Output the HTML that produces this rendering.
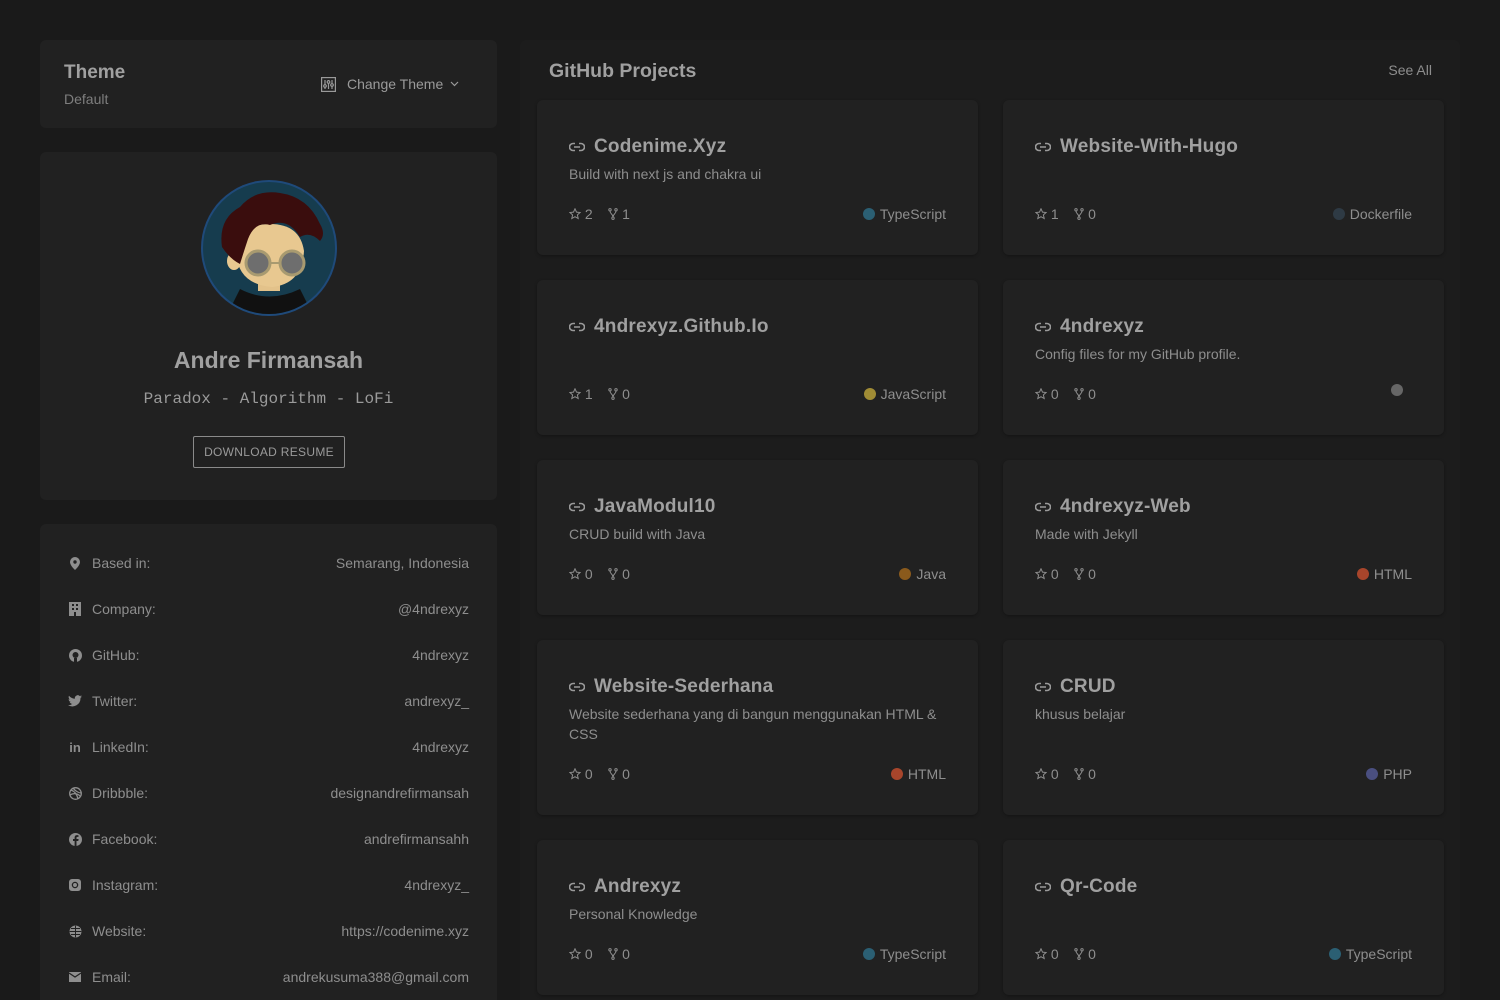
<!DOCTYPE html>
<html><head><meta charset="utf-8"><style>
*{box-sizing:border-box;margin:0;padding:0}
html{width:1500px;height:1000px;overflow:hidden}
body{width:1500px;height:1000px;overflow:hidden;background:#1a1a1a;font-family:"Liberation Sans",sans-serif;color:#9a9a9a;position:relative}
.card{position:absolute;background:#212121;border-radius:6px}
.panel{position:absolute;left:520px;top:40px;width:940px;height:980px;background:#1c1c1c;border-radius:6px}
.pc{position:absolute;width:441px;background:#212121;border-radius:6px;box-shadow:0 1px 3px rgba(0,0,0,.3)}
.pt{position:absolute;left:32px;top:36px;font-size:19px;font-weight:bold;color:#a0a0a0;letter-spacing:.2px;display:flex;align-items:center}
.pt svg{margin-right:9px}
.pd{position:absolute;left:32px;top:64px;width:380px;font-size:14px;line-height:20px;color:#8e8e8e}
.ps{position:absolute;left:32px;bottom:33px;font-size:14px;color:#8e8e8e;display:flex;align-items:center}
.pl{position:absolute;right:32px;bottom:33px;font-size:14px;color:#8e8e8e;display:flex;align-items:center}
.dot{width:12px;height:12px;border-radius:50%;margin-right:5px;display:inline-block}
.row{position:absolute;left:28px;right:28px;display:flex;align-items:center;font-size:14px;color:#8e8e8e}
.row .ic{width:14px;height:14px;margin-right:10px;display:flex;align-items:center;justify-content:center}
.row .v{margin-left:auto}
</style></head><body>
<div class="card" style="left:40px;top:40px;width:457px;height:88px">
<div style="position:absolute;left:24px;top:22px;font-size:19px;font-weight:bold;color:#a0a0a0">Theme</div>
<div style="position:absolute;left:24px;top:51px;font-size:14px;color:#7e7e7e">Default</div>
<div style="position:absolute;left:281px;top:36px;font-size:14px;color:#9a9a9a;display:flex;align-items:center">
<svg width="15" height="15" viewBox="0 0 15 15" fill="none" stroke="#9a9a9a" stroke-width="1.2"><rect x="0.6" y="0.6" width="13.8" height="13.8"/><path d="M4 3v9M7.5 3v9M11 3v9"/><circle cx="4" cy="9" r="1.3" fill="#212121"/><circle cx="7.5" cy="5" r="1.3" fill="#212121"/><circle cx="11" cy="8" r="1.3" fill="#212121"/></svg>
<span style="margin-left:11px">Change Theme</span>
<svg style="margin-left:7px" width="9" height="6" viewBox="0 0 9 6" fill="none" stroke="#9a9a9a" stroke-width="1.2"><path d="M1 1l3.5 3.5L8 1"/></svg></div>
</div>
<div class="card" style="left:40px;top:152px;width:457px;height:348px">
<svg style="position:absolute;left:160px;top:27px" width="138" height="138" viewBox="0 0 138 138">
<defs><clipPath id="cc"><circle cx="69" cy="69" r="66"/></clipPath></defs>
<circle cx="69" cy="69" r="68" fill="#1f4a7a"/><circle cx="69" cy="69" r="66" fill="#163c4e"/>
<g clip-path="url(#cc)">
<path d="M40 110 Q69 125 100 110 L115 140 L25 140Z" fill="#111"/>
<rect x="58" y="92" width="22" height="20" fill="#e3c28a"/>
<path d="M36 70 Q36 105 72 108 Q102 105 104 72 Q100 45 70 45 Q40 45 36 70Z" fill="#e8c890"/>
<ellipse cx="34" cy="82" rx="7" ry="9" fill="#e8c890"/>
<path d="M22 68 Q18 40 40 28 Q55 10 80 14 Q108 18 120 45 Q126 55 120 62 Q110 52 100 58 Q88 38 70 46 Q55 42 48 60 Q44 72 40 85 Q30 80 22 68Z" fill="#3a0d0d"/>
<circle cx="58" cy="84" r="12" fill="#6e6e6e" stroke="#a89a70" stroke-width="3"/><circle cx="92" cy="84" r="12" fill="#6e6e6e" stroke="#a89a70" stroke-width="3"/>
<path d="M70 84h10" stroke="#a89a70" stroke-width="2"/>
</g>
</svg>
<div style="position:absolute;left:0;right:0;top:195px;text-align:center;font-size:23px;font-weight:bold;color:#a0a0a0">Andre Firmansah</div>
<div style="position:absolute;left:0;right:0;top:238px;text-align:center;font-family:'Liberation Mono',monospace;font-size:16px;color:#9a9a9a">Paradox - Algorithm - LoFi</div>
<div style="position:absolute;left:153px;top:284px;width:152px;height:32px;border:1px solid #8a8a8a;border-radius:2px;font-size:12px;color:#9a9a9a;text-align:center;line-height:30px;letter-spacing:.3px">DOWNLOAD RESUME</div>
</div>
<div class="card" style="left:40px;top:524px;width:457px;height:476px;border-radius:6px 6px 0 0">
<div class="row" style="top:31px"><span class="ic"><svg width="10" height="13" viewBox="0 0 10 13"><path d="M5 0a5 5 0 0 0-5 5c0 3.5 5 8 5 8s5-4.5 5-8a5 5 0 0 0-5-5z" fill="#8e8e8e"/><circle cx="5" cy="5" r="1.7" fill="#212121"/></svg></span>Based in:<span class="v">Semarang, Indonesia</span></div>
<div class="row" style="top:77px"><span class="ic"><svg width="12" height="14" viewBox="0 0 12 14"><rect x="0" y="0" width="12" height="14" fill="#8e8e8e"/><g fill="#212121"><rect x="3" y="2" width="2" height="2"/><rect x="7" y="2" width="2" height="2"/><rect x="3" y="6" width="2" height="2"/><rect x="7" y="6" width="2" height="2"/><rect x="5" y="10" width="2" height="4"/></g></svg></span>Company:<span class="v">@4ndrexyz</span></div>
<div class="row" style="top:123px"><span class="ic"><svg width="13" height="13" viewBox="0 0 13 13"><circle cx="6.5" cy="6.5" r="6.5" fill="#8e8e8e"/><circle cx="6.5" cy="6" r="3" fill="#212121"/><rect x="5" y="9" width="3" height="4" fill="#212121"/></svg></span>GitHub:<span class="v">4ndrexyz</span></div>
<div class="row" style="top:169px"><span class="ic"><svg width="14" height="12" viewBox="0 0 14 12"><path d="M14 1.5c-.5.2-1 .4-1.6.4.6-.4 1-.9 1.2-1.5-.6.3-1.2.6-1.8.7A2.9 2.9 0 0 0 6.9 3.7 8 8 0 0 1 1 .7a2.9 2.9 0 0 0 .9 3.8c-.5 0-.9-.2-1.3-.4 0 1.4 1 2.6 2.3 2.8-.4.1-.9.1-1.3 0 .4 1.1 1.4 2 2.700 2A5.8 5.8 0 0 1 0 10.1 8.1 8.1 0 0 0 12.5 3.3v-.4c.6-.4 1.1-.9 1.5-1.4z" fill="#8e8e8e"/></svg></span>Twitter:<span class="v">andrexyz_</span></div>
<div class="row" style="top:215px"><span class="ic" style="font-weight:bold;font-size:13px">in</span>LinkedIn:<span class="v">4ndrexyz</span></div>
<div class="row" style="top:261px"><span class="ic"><svg width="13" height="13" viewBox="0 0 13 13" fill="none" stroke="#8e8e8e" stroke-width="1.3"><circle cx="6.5" cy="6.5" r="5.8"/><path d="M2 3c3 1 6 4 7 9M4 1c2 3 6 5 8 5M1 8c3-2 7-2 10 1"/></svg></span>Dribbble:<span class="v">designandrefirmansah</span></div>
<div class="row" style="top:307px"><span class="ic"><svg width="13" height="13" viewBox="0 0 13 13"><circle cx="6.5" cy="6.5" r="6.5" fill="#8e8e8e"/><path d="M7.5 13V8h1.8l.3-2H7.5V4.8c0-.5.2-.9 1-.9h1V2.2c-.3 0-.9-.1-1.5-.1-1.5 0-2.4.9-2.4 2.5V6H4v2h1.6v5z" fill="#212121"/></svg></span>Facebook:<span class="v">andrefirmansahh</span></div>
<div class="row" style="top:353px"><span class="ic"><svg width="12" height="12" viewBox="0 0 12 12"><rect width="12" height="12" rx="3" fill="#8e8e8e"/><circle cx="6" cy="6" r="2.6" fill="none" stroke="#212121" stroke-width="1.3"/></svg></span>Instagram:<span class="v">4ndrexyz_</span></div>
<div class="row" style="top:399px"><span class="ic"><svg width="13" height="13" viewBox="0 0 13 13" fill="none"><circle cx="6.5" cy="6.5" r="6" fill="#8e8e8e"/><path d="M6.5 .7v11.6M.7 6.5h11.6M2 3.5h9M2 9.5h9" stroke="#212121" stroke-width="1"/></svg></span>Website:<span class="v">https://codenime.xyz</span></div>
<div class="row" style="top:445px"><span class="ic"><svg width="12" height="10" viewBox="0 0 12 10"><rect width="12" height="10" fill="#8e8e8e"/><path d="M0 1l6 4 6-4" fill="none" stroke="#212121" stroke-width="1.2"/></svg></span>Email:<span class="v">andrekusuma388@gmail.com</span></div>
</div>
<div class="panel">
<div style="position:absolute;left:29px;top:20px;font-size:19.5px;font-weight:bold;color:#a0a0a0">GitHub Projects</div>
<div style="position:absolute;right:28px;top:22px;font-size:14px;color:#8e8e8e">See All</div>
</div>
<svg width="0" height="0" style="position:absolute"><defs>
<symbol id="lk" viewBox="0 0 16 10"><g fill="none" stroke="#9a9a9a" stroke-width="1.6"><path d="M6 1.5H4a3.5 3.5 0 0 0 0 7h2M10 1.5h2a3.5 3.5 0 0 1 0 7h-2M5 5h6"/></g></symbol>
<symbol id="st" viewBox="0 0 12 12"><path d="M6 .8l1.5 3.3 3.6.4-2.7 2.4.8 3.6L6 8.7 2.8 10.5l.8-3.6L.9 4.5l3.6-.4z" fill="none" stroke="#8e8e8e" stroke-width="1"/></symbol>
<symbol id="fk" viewBox="0 0 10 12"><g fill="none" stroke="#8e8e8e" stroke-width="1"><circle cx="2" cy="1.8" r="1.2"/><circle cx="8" cy="1.8" r="1.2"/><circle cx="5" cy="10.2" r="1.2"/><path d="M2 3c0 3 3 3 3 6M8 3c0 3-3 3-3 6"/></g></symbol>
</defs></svg>
<div class="pc" style="left:537px;top:100px;height:155px"><div class="pt"><svg width="16" height="10"><use href="#lk"/></svg>Codenime.Xyz</div><div class="pd">Build with next js and chakra ui</div><div class="ps"><svg width="12" height="12"><use href="#st"/></svg>&nbsp;2&nbsp;&nbsp;&nbsp;&nbsp;<svg width="10" height="12"><use href="#fk"/></svg>&nbsp;1</div><div class="pl"><span class="dot" style="background:#2b5f73"></span>TypeScript</div></div>
<div class="pc" style="left:1003px;top:100px;height:155px"><div class="pt"><svg width="16" height="10"><use href="#lk"/></svg>Website-With-Hugo</div><div class="ps"><svg width="12" height="12"><use href="#st"/></svg>&nbsp;1&nbsp;&nbsp;&nbsp;&nbsp;<svg width="10" height="12"><use href="#fk"/></svg>&nbsp;0</div><div class="pl"><span class="dot" style="background:#2e3a44"></span>Dockerfile</div></div>
<div class="pc" style="left:537px;top:280px;height:155px"><div class="pt"><svg width="16" height="10"><use href="#lk"/></svg>4ndrexyz.Github.Io</div><div class="ps"><svg width="12" height="12"><use href="#st"/></svg>&nbsp;1&nbsp;&nbsp;&nbsp;&nbsp;<svg width="10" height="12"><use href="#fk"/></svg>&nbsp;0</div><div class="pl"><span class="dot" style="background:#a08c35"></span>JavaScript</div></div>
<div class="pc" style="left:1003px;top:280px;height:155px"><div class="pt"><svg width="16" height="10"><use href="#lk"/></svg>4ndrexyz</div><div class="pd">Config files for my GitHub profile.</div><div class="ps"><svg width="12" height="12"><use href="#st"/></svg>&nbsp;0&nbsp;&nbsp;&nbsp;&nbsp;<svg width="10" height="12"><use href="#fk"/></svg>&nbsp;0</div><div class="pl" style="bottom:39px;right:36px"><span class="dot" style="background:#666"></span></div></div>
<div class="pc" style="left:537px;top:460px;height:155px"><div class="pt"><svg width="16" height="10"><use href="#lk"/></svg>JavaModul10</div><div class="pd">CRUD build with Java</div><div class="ps"><svg width="12" height="12"><use href="#st"/></svg>&nbsp;0&nbsp;&nbsp;&nbsp;&nbsp;<svg width="10" height="12"><use href="#fk"/></svg>&nbsp;0</div><div class="pl"><span class="dot" style="background:#8a5a1c"></span>Java</div></div>
<div class="pc" style="left:1003px;top:460px;height:155px"><div class="pt"><svg width="16" height="10"><use href="#lk"/></svg>4ndrexyz-Web</div><div class="pd">Made with Jekyll</div><div class="ps"><svg width="12" height="12"><use href="#st"/></svg>&nbsp;0&nbsp;&nbsp;&nbsp;&nbsp;<svg width="10" height="12"><use href="#fk"/></svg>&nbsp;0</div><div class="pl"><span class="dot" style="background:#a8452b"></span>HTML</div></div>
<div class="pc" style="left:537px;top:640px;height:175px"><div class="pt"><svg width="16" height="10"><use href="#lk"/></svg>Website-Sederhana</div><div class="pd">Website sederhana yang di bangun menggunakan HTML &amp; CSS</div><div class="ps"><svg width="12" height="12"><use href="#st"/></svg>&nbsp;0&nbsp;&nbsp;&nbsp;&nbsp;<svg width="10" height="12"><use href="#fk"/></svg>&nbsp;0</div><div class="pl"><span class="dot" style="background:#a8452b"></span>HTML</div></div>
<div class="pc" style="left:1003px;top:640px;height:175px"><div class="pt"><svg width="16" height="10"><use href="#lk"/></svg>CRUD</div><div class="pd">khusus belajar</div><div class="ps"><svg width="12" height="12"><use href="#st"/></svg>&nbsp;0&nbsp;&nbsp;&nbsp;&nbsp;<svg width="10" height="12"><use href="#fk"/></svg>&nbsp;0</div><div class="pl"><span class="dot" style="background:#4a4f80"></span>PHP</div></div>
<div class="pc" style="left:537px;top:840px;height:155px"><div class="pt"><svg width="16" height="10"><use href="#lk"/></svg>Andrexyz</div><div class="pd">Personal Knowledge</div><div class="ps"><svg width="12" height="12"><use href="#st"/></svg>&nbsp;0&nbsp;&nbsp;&nbsp;&nbsp;<svg width="10" height="12"><use href="#fk"/></svg>&nbsp;0</div><div class="pl"><span class="dot" style="background:#2b5f73"></span>TypeScript</div></div>
<div class="pc" style="left:1003px;top:840px;height:155px"><div class="pt"><svg width="16" height="10"><use href="#lk"/></svg>Qr-Code</div><div class="ps"><svg width="12" height="12"><use href="#st"/></svg>&nbsp;0&nbsp;&nbsp;&nbsp;&nbsp;<svg width="10" height="12"><use href="#fk"/></svg>&nbsp;0</div><div class="pl"><span class="dot" style="background:#2b5f73"></span>TypeScript</div></div>
</body></html>
